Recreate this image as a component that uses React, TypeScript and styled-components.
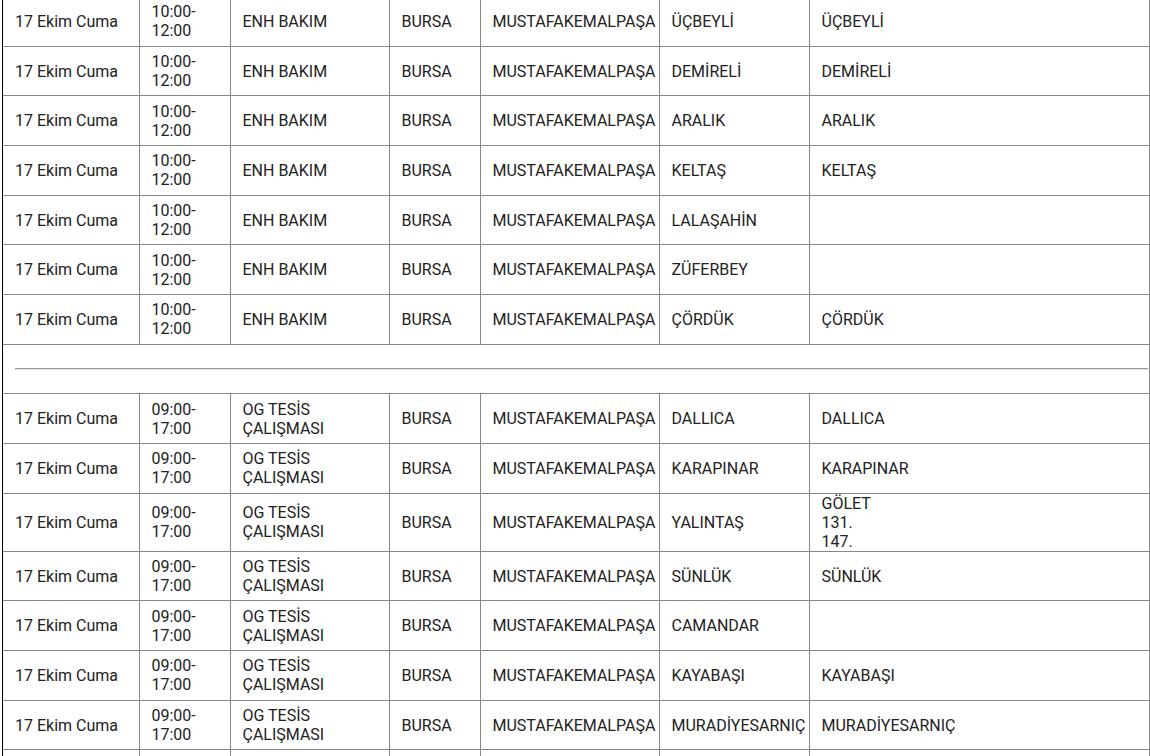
import React from "react";
import styled, { createGlobalStyle } from "styled-components";

const GlobalStyle = createGlobalStyle`
  html, body {
    margin: 0;
    padding: 0;
    background: #ffffff;
    overflow: hidden;
  }
  body {
    font-family: Roboto, "Liberation Sans", Arial, sans-serif;
  }
`;

const Page = styled.div`
  padding-left: 2px;
  height: 756px;
  overflow: hidden;
`;

const Frame = styled.div`
  border-left: 1px solid #000;
  margin-top: -4px;
`;

const Table = styled.table`
  border-collapse: collapse;
  table-layout: fixed;
  width: 1146px;
  font-size: 16px;
  line-height: 19px;
  color: #222;
`;

const Row = styled.tr<{ $h?: number }>`
  height: ${(p) => p.$h ?? 49.68}px;
`;

const Cell = styled.td`
  border: 1px solid #888;
  padding: 0 12px;
  vertical-align: middle;
  white-space: normal;
  &:first-child {
    border-left: none;
  }
`;

const SepCell = styled.td`
  border: 1px solid #888;
  border-left: none;
  padding: 0 0 0 12px;
  vertical-align: middle;
`;

const Divider = styled.div`
  height: 0;
  border-top: 1px solid #999;
  border-bottom: 1px solid #e6e6e6;
  margin-right: 1px;
`;

type R = { date: string; time: string; work: string; city: string; district: string; area: string; street: React.ReactNode };

const g1 = (area: string, street: React.ReactNode): R => ({
  date: "17 Ekim Cuma",
  time: "10:00-12:00",
  work: "ENH BAKIM",
  city: "BURSA",
  district: "MUSTAFAKEMALPAŞA",
  area,
  street,
});

const g2 = (area: string, street: React.ReactNode): R => ({
  date: "17 Ekim Cuma",
  time: "09:00-17:00",
  work: "OG TESİS ÇALIŞMASI",
  city: "BURSA",
  district: "MUSTAFAKEMALPAŞA",
  area,
  street,
});

const group1: R[] = [
  g1("ÜÇBEYLİ", "ÜÇBEYLİ"),
  g1("DEMİRELİ", "DEMİRELİ"),
  g1("ARALIK", "ARALIK"),
  g1("KELTAŞ", "KELTAŞ"),
  g1("LALAŞAHİN", ""),
  g1("ZÜFERBEY", ""),
  g1("ÇÖRDÜK", "ÇÖRDÜK"),
];

const group2: R[] = [
  g2("DALLICA", "DALLICA"),
  g2("KARAPINAR", "KARAPINAR"),
  g2(
    "YALINTAŞ",
    <>
      GÖLET
      <br />
      131.
      <br />
      147.
    </>
  ),
  g2("SÜNLÜK", "SÜNLÜK"),
  g2("CAMANDAR", ""),
  g2("KAYABAŞI", "KAYABAŞI"),
  g2("MURADİYESARNIÇ", "MURADİYESARNIÇ"),
];

const cols = [136, 91, 159, 91, 179, 150, 340];

const DataRow: React.FC<{ r: R }> = ({ r }) => (
  <Row>
    <Cell>{r.date}</Cell>
    <Cell>{r.time}</Cell>
    <Cell>{r.work}</Cell>
    <Cell>{r.city}</Cell>
    <Cell>{r.district}</Cell>
    <Cell>{r.area}</Cell>
    <Cell>{r.street}</Cell>
  </Row>
);

export default function App() {
  return (
    <Page>
      <GlobalStyle />
      <Frame>
        <Table>
          <colgroup>
            {cols.map((w, i) => (
              <col key={i} style={{ width: w }} />
            ))}
          </colgroup>
          <tbody>
            {group1.map((r, i) => (
              <DataRow key={"a" + i} r={r} />
            ))}
            <Row>
              <SepCell colSpan={7}>
                <Divider />
              </SepCell>
            </Row>
            {group2.map((r, i) => (
              <DataRow key={"b" + i} r={r} />
            ))}
            <Row>
              {cols.map((_, i) => (
                <Cell key={i} />
              ))}
            </Row>
          </tbody>
        </Table>
      </Frame>
    </Page>
  );
}
